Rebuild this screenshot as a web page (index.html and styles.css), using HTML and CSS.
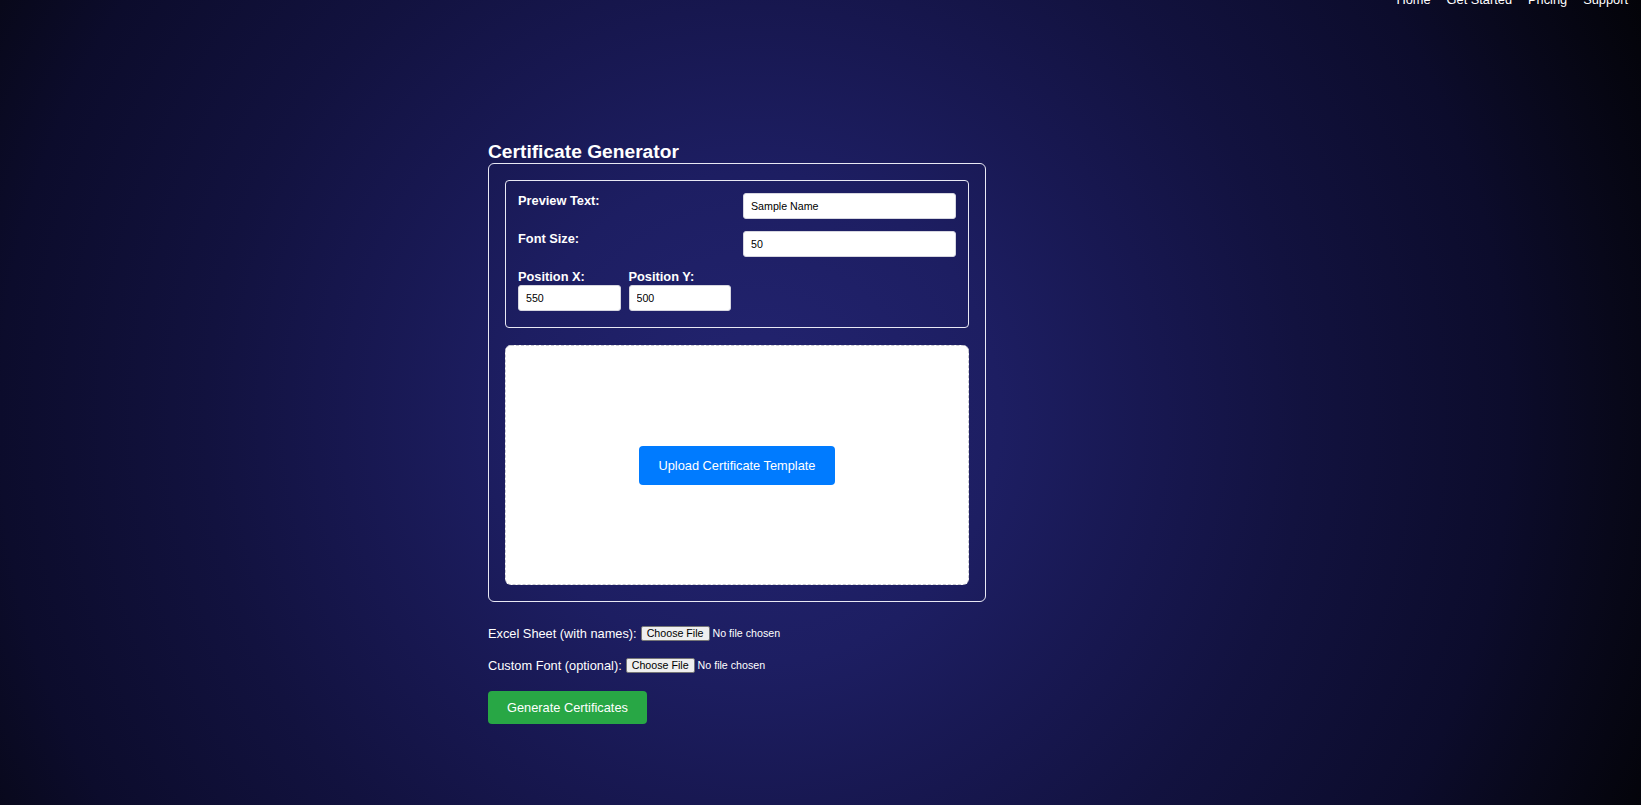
FILE: index.html
```html
<!DOCTYPE html>
<html lang="en">
<head>
<meta charset="utf-8">
<title>Certificate Generator</title>
<link rel="stylesheet" href="styles.css">
</head>
<body>
<nav class="topnav">
  <a href="#">Home</a>
  <a href="#">Get Started</a>
  <a href="#">Pricing</a>
  <a href="#">Support</a>
</nav>
<main class="main">
  <h2 class="title">Certificate Generator</h2>
  <section class="panel">
    <div class="settings">
      <label class="lbl">Preview Text:</label>
      <input class="field" type="text" value="Sample Name">
      <label class="lbl">Font Size:</label>
      <input class="field" type="text" value="50">
      <div class="pos">
        <div class="pos-item">
          <label class="lbl">Position X:</label>
          <input class="field" type="text" value="550">
        </div>
        <div class="pos-item">
          <label class="lbl">Position Y:</label>
          <input class="field" type="text" value="500">
        </div>
      </div>
    </div>
    <div class="dropzone">
      <button class="btn btn-blue">Upload Certificate Template</button>
    </div>
  </section>
  <div class="filerow first">
    <span>Excel Sheet (with names):</span>
    <input class="file" type="file">
  </div>
  <div class="filerow">
    <span>Custom Font (optional):</span>
    <input class="file" type="file">
  </div>
  <button class="btn btn-green">Generate Certificates</button>
</main>
</body>
</html>
```
FILE: styles.css
```css
html {
  min-height: 100%;
  background: radial-gradient(circle farthest-corner at 46% 52%, #232471 0%, #1d1e62 25%, #17174f 42%, #12123f 56%, #0c0c2c 77%, #08081a 88%, #030308 100%);
}
body {
  margin: 0;
  min-height: 805px;
  color: #fff;
  font-family: "Liberation Sans", Arial, sans-serif;
  font-size: 12.8px;
}
.topnav {
  display: flex;
  justify-content: flex-end;
  gap: 16px;
  padding-right: 13px;
  margin-top: -8px;
  line-height: 15px;
}
.topnav a {
  color: #fff;
  text-decoration: none;
}
.main {
  margin: 134px 0 0 488px;
  width: 498px;
}
.title {
  margin: 0;
  font-size: 19.2px;
  font-weight: bold;
  line-height: 22px;
}
.panel {
  box-sizing: border-box;
  width: 498px;
  border: 1px solid #e8e8f4;
  border-radius: 6px;
  padding: 16px;
}
.settings {
  display: grid;
  grid-template-columns: 1fr 1fr;
  gap: 12px;
  border: 1px solid #e8e8f4;
  border-radius: 4px;
  padding: 12px 12px 16px;
}
.lbl {
  display: block;
  font-weight: bold;
  line-height: 16px;
}
.field {
  box-sizing: border-box;
  width: 100%;
  height: 26px;
  margin: 0;
  padding: 0 7px;
  border: 1px solid #d6d6e0;
  border-radius: 3px;
  background: #fff;
  color: #000;
  font-family: "Liberation Sans", Arial, sans-serif;
  font-size: 10.67px;
}
.pos {
  display: grid;
  grid-template-columns: 1fr 1fr;
  gap: 8px;
}
.dropzone {
  box-sizing: border-box;
  height: 240px;
  margin-top: 17px;
  background: #fff;
  border: 1px dashed #c8c8d0;
  border-radius: 6px;
  display: flex;
  align-items: center;
  justify-content: center;
}
.btn {
  border: none;
  border-radius: 4px;
  color: #fff;
  font-family: "Liberation Sans", Arial, sans-serif;
  font-size: 12.8px;
  line-height: 15px;
}
.btn-blue {
  background: #007bff;
  padding: 12px 19.5px;
}
.btn-green {
  display: block;
  margin-top: 18px;
  background: #28a745;
  padding: 9px 19px;
}
.filerow {
  display: flex;
  align-items: center;
  gap: 4px;
  height: 16px;
  margin-top: 16px;
  white-space: nowrap;
}
.filerow.first {
  margin-top: 23px;
}
.file {
  color: #fff;
  font-family: "Liberation Sans", Arial, sans-serif;
  font-size: 10.67px;
  width: 200px;
}
.file::file-selector-button {
  font-family: "Liberation Sans", Arial, sans-serif;
  font-size: 10.67px;
  color: #000;
  background: #efefef;
  border: 1px solid #767676;
  border-radius: 2px;
  height: 15px;
  padding: 0 5px;
  margin-right: 3px;
  line-height: 13px;
}
```
